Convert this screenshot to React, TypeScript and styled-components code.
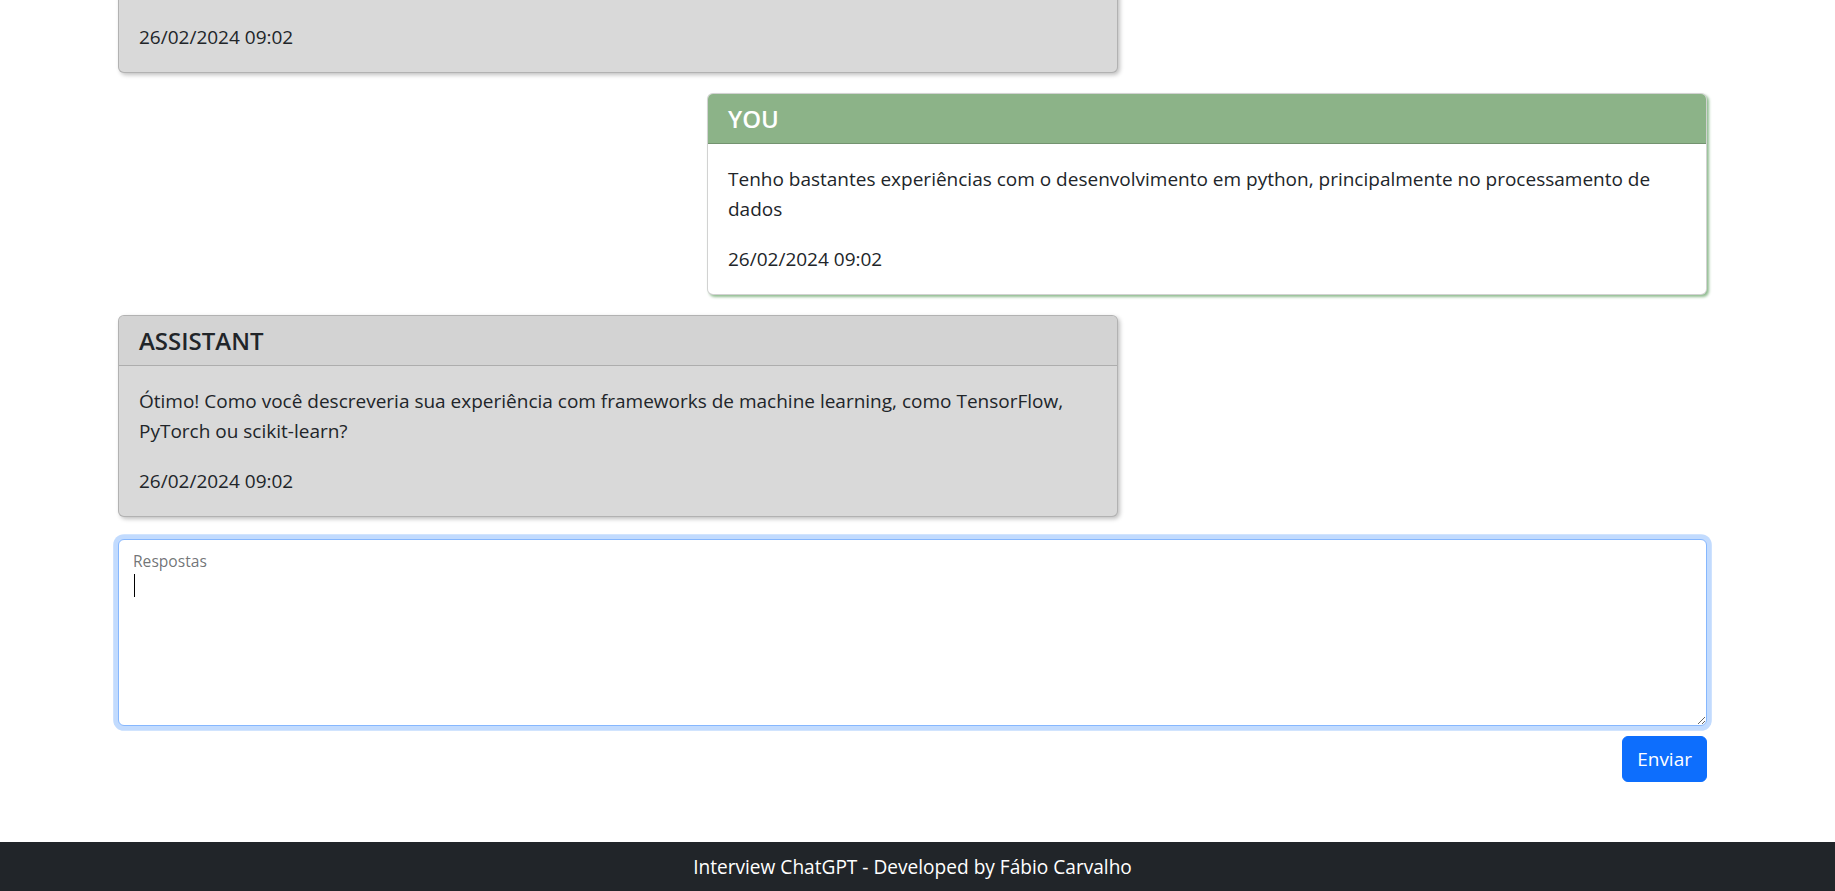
import React from 'react';
import styled, { createGlobalStyle } from 'styled-components';

const GlobalStyle = createGlobalStyle`
  html, body {
    margin: 0;
    padding: 0;
    height: 100%;
  }
  body {
    font-family: "Segoe UI", "Open Sans", "Noto Sans", sans-serif;
    color: #212529;
    background: #ffffff;
    overflow: hidden;
  }
  #root {
    height: 100%;
  }
  * {
    box-sizing: border-box;
  }
`;

const Page = styled.div`
  height: 100vh;
  display: flex;
  flex-direction: column;
`;

const Main = styled.main`
  flex: 1;
  min-height: 0;
  overflow: hidden;
  display: flex;
  flex-direction: column;
  justify-content: flex-end;
  padding: 0 128px 60px 118px;
`;

const ChatList = styled.section`
  flex-shrink: 0;
  display: flex;
  flex-direction: column;
  gap: 20px;
`;

const Card = styled.article<{ $user?: boolean }>`
  width: 1000px;
  align-self: ${(p) => (p.$user ? 'flex-end' : 'flex-start')};
  background: ${(p) => (p.$user ? '#ffffff' : '#d9d9d9')};
  border: 1px solid rgba(0, 0, 0, 0.175);
  border-radius: 6px;
  overflow: hidden;
  box-shadow: ${(p) =>
    p.$user ? '2px 2px 3px #8fbc8f' : '2px 2px 4px rgba(0, 0, 0, 0.25)'};
`;

const CardHeader = styled.header<{ $user?: boolean }>`
  background: ${(p) => (p.$user ? '#8cb388' : '#d3d3d3')};
  border-bottom: 1px solid rgba(0, 0, 0, 0.175);
  padding: 9.5px 20px;
`;

const Role = styled.h5<{ $user?: boolean }>`
  margin: 0;
  font-size: 24px;
  font-weight: 600;
  line-height: 30px;
  color: ${(p) => (p.$user ? '#ffffff' : '#212529')};
`;

const CardBody = styled.div`
  padding: 20px;
`;

const Message = styled.p`
  margin: 0 0 20px;
  font-size: 19px;
  line-height: 30px;
`;

const Stamp = styled.p`
  margin: 0;
  font-size: 19px;
  line-height: 30px;
`;

const AnswerForm = styled.form`
  flex-shrink: 0;
  display: flex;
  flex-direction: column;
  margin-top: 22px;
`;

const Floating = styled.div`
  position: relative;
`;

const TextArea = styled.textarea`
  display: block;
  width: 100%;
  height: 187px;
  padding: 33px 14.4px 7px;
  border: 1px solid #86b7fe;
  border-radius: 6px;
  box-shadow: 0 0 0 4.8px rgba(13, 110, 253, 0.25);
  font-family: inherit;
  font-size: 19px;
  line-height: 30px;
  color: #212529;
  outline: none;
  resize: vertical;
`;

const FloatLabel = styled.label`
  position: absolute;
  top: 10px;
  left: 15px;
  font-size: 15.6px;
  line-height: 24px;
  color: rgba(33, 37, 41, 0.65);
  pointer-events: none;
`;

const Caret = styled.span`
  position: absolute;
  top: 35px;
  left: 16px;
  width: 1px;
  height: 23px;
  background: #000000;
  pointer-events: none;
`;

const SendButton = styled.button`
  align-self: flex-end;
  margin-top: 10px;
  padding: 7.5px 14px;
  border: 1px solid #0d6efd;
  border-radius: 6px;
  background: #0d6efd;
  color: #ffffff;
  font-family: inherit;
  font-size: 19px;
  line-height: 29px;
  cursor: pointer;
`;

const Footer = styled.footer`
  flex-shrink: 0;
  background: #212529;
  color: #ffffff;
  text-align: center;
  padding: 9.5px 10px 9.5px 0;
  font-size: 19.1px;
  line-height: 30px;
`;

type Msg = { user: boolean; text: string; date: string };

const messages: Msg[] = [
  {
    user: false,
    text: 'Olá! Bem-vindo à entrevista. Para começar, poderia falar um pouco sobre a sua experiência com programação em Python?',
    date: '26/02/2024 09:02',
  },
  {
    user: true,
    text: 'Tenho bastantes experiências com o desenvolvimento em python, principalmente no processamento de dados',
    date: '26/02/2024 09:02',
  },
  {
    user: false,
    text: 'Ótimo! Como você descreveria sua experiência com frameworks de machine learning, como TensorFlow, PyTorch ou scikit-learn?',
    date: '26/02/2024 09:02',
  },
];

export default function App() {
  return (
    <>
      <GlobalStyle />
      <Page>
        <Main>
          <ChatList>
            {messages.map((m, i) => (
              <Card key={i} $user={m.user}>
                <CardHeader $user={m.user}>
                  <Role $user={m.user}>{m.user ? 'YOU' : 'ASSISTANT'}</Role>
                </CardHeader>
                <CardBody>
                  <Message>{m.text}</Message>
                  <Stamp>{m.date}</Stamp>
                </CardBody>
              </Card>
            ))}
          </ChatList>
          <AnswerForm onSubmit={(e) => e.preventDefault()}>
            <Floating>
              <TextArea id="resposta" />
              <FloatLabel htmlFor="resposta">Respostas</FloatLabel>
              <Caret />
            </Floating>
            <SendButton type="submit">Enviar</SendButton>
          </AnswerForm>
        </Main>
        <Footer>Interview ChatGPT - Developed by Fábio Carvalho</Footer>
      </Page>
    </>
  );
}
